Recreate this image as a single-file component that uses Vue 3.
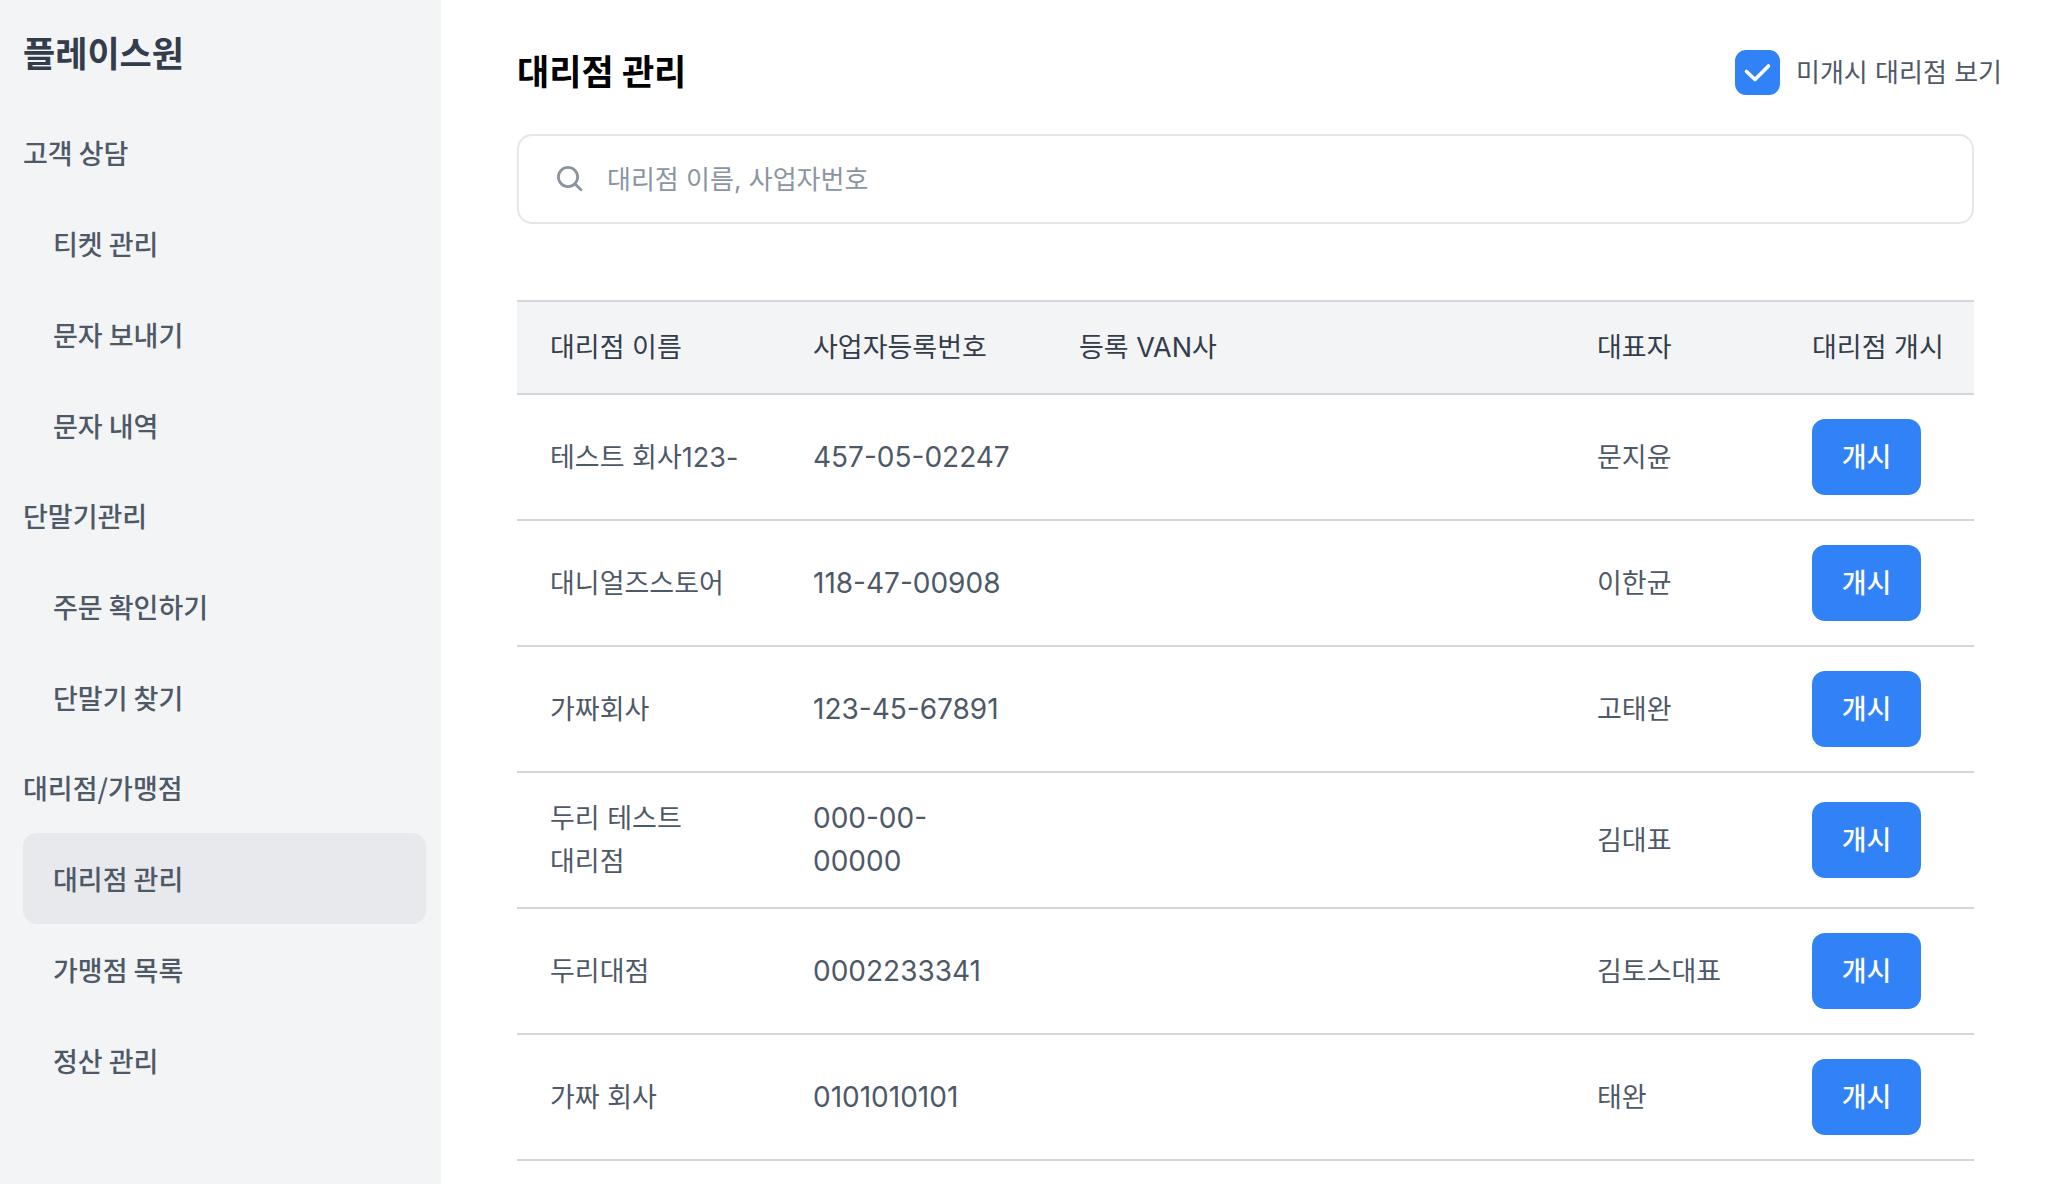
<script setup>
import { ref } from 'vue'

const menu = [
  { title: '고객 상담', items: ['티켓 관리', '문자 보내기', '문자 내역'] },
  { title: '단말기관리', items: ['주문 확인하기', '단말기 찾기'] },
  { title: '대리점/가맹점', items: ['대리점 관리', '가맹점 목록', '정산 관리'] },
]
const current = ref('대리점 관리')
const showHidden = ref(true)
const keyword = ref('')

const agencies = [
  { name: '테스트 회사123-', number: '457-05-02247', van: '', owner: '문지윤' },
  { name: '대니얼즈스토어', number: '118-47-00908', van: '', owner: '이한균' },
  { name: '가짜회사', number: '123-45-67891', van: '', owner: '고태완' },
  { name: '두리 테스트 대리점', number: '000-00-00000', van: '', owner: '김대표' },
  { name: '두리대점', number: '0002233341', van: '', owner: '김토스대표' },
  { name: '가짜 회사', number: '0101010101', van: '', owner: '태완' },
]
</script>

<template>
  <div class="layout">
    <aside class="sidebar">
      <p class="brand">플레이스원</p>
      <nav>
        <section v-for="group in menu" :key="group.title">
          <h2 class="group-title">{{ group.title }}</h2>
          <ul class="menu">
            <li v-for="item in group.items" :key="item">
              <a
                href="#"
                class="menu-link"
                :class="{ active: item === current }"
                @click.prevent="current = item"
              >{{ item }}</a>
            </li>
          </ul>
        </section>
      </nav>
    </aside>

    <main class="content">
      <header class="page-header">
        <h1 class="page-title">대리점 관리</h1>
        <label class="toggle">
          <span class="checkbox">
            <input v-model="showHidden" type="checkbox" class="checkbox-input" />
            <svg v-if="showHidden" class="checkbox-mark" viewBox="0 0 45 45" aria-hidden="true">
              <path d="M11.5 21.5 L20 29.5 L33.5 16" />
            </svg>
          </span>
          <span>미개시 대리점 보기</span>
        </label>
      </header>

      <label class="search">
        <svg class="search-icon" viewBox="0 0 28 28" aria-hidden="true">
          <circle cx="12" cy="12" r="9.6" />
          <path d="M19 19 L25 24.7" />
        </svg>
        <input
          v-model="keyword"
          class="search-input"
          type="text"
          placeholder="대리점 이름, 사업자번호"
          aria-label="대리점 검색"
        />
      </label>

      <table class="table">
        <colgroup>
          <col class="col-name" />
          <col class="col-number" />
          <col />
          <col class="col-owner" />
          <col class="col-open" />
        </colgroup>
        <thead>
          <tr>
            <th scope="col">대리점 이름</th>
            <th scope="col">사업자등록번호</th>
            <th scope="col">등록 VAN사</th>
            <th scope="col">대표자</th>
            <th scope="col">대리점 개시</th>
          </tr>
        </thead>
        <tbody>
          <tr v-for="agency in agencies" :key="agency.number">
            <td>{{ agency.name }}</td>
            <td class="number">{{ agency.number }}</td>
            <td>{{ agency.van }}</td>
            <td>{{ agency.owner }}</td>
            <td><button type="button" class="open-button">개시</button></td>
          </tr>
        </tbody>
      </table>
    </main>
  </div>
</template>

<style>
body {
  margin: 0;
  background: #fff;
}
</style>

<style scoped>
.layout {
  display: flex;
  min-height: 100vh;
  font-family: Inter, 'Noto Sans CJK KR', sans-serif;
  font-size: 27px;
  line-height: 43px;
  color: #4e5968;
  word-break: keep-all;
}

.sidebar {
  box-sizing: border-box;
  flex: 0 0 441px;
  padding: 28px 15px 0 23px;
  background: #f3f4f6;
  font-family: 'Noto Sans CJK KR', sans-serif;
}

.brand {
  margin: 0 0 32px;
  font-size: 35px;
  line-height: 48px;
  font-weight: 700;
  color: #333d4b;
}

.group-title {
  margin: 0;
  font-size: 27px;
  line-height: 90px;
  font-weight: 500;
}

.menu {
  margin: 0;
  padding: 0;
  list-style: none;
}

.menu-link {
  display: block;
  padding-left: 30px;
  border-radius: 14px;
  line-height: 91px;
  font-weight: 500;
  color: inherit;
  text-decoration: none;
}

.menu-link.active {
  background: #e8e9ec;
}

.content {
  flex: 1;
  min-width: 0;
  padding: 48px 74px 0 76px;
}

.page-header {
  display: flex;
  align-items: center;
  justify-content: space-between;
  margin: 0 -28px 38px 0;
}

.page-title {
  margin: 0;
  font-size: 35px;
  line-height: 48px;
  font-weight: 700;
  color: #000;
}

.toggle {
  display: flex;
  align-items: center;
  gap: 16px;
  font-size: 26px;
}

.checkbox {
  position: relative;
  display: block;
  width: 45px;
  height: 45px;
}

.checkbox-input {
  appearance: none;
  display: block;
  width: 100%;
  height: 100%;
  margin: 0;
  border: 2px solid #d1d6db;
  border-radius: 11px;
  background: #fff;
}

.checkbox-input:checked {
  border-color: #3182f6;
  background: #3182f6;
}

.checkbox-mark {
  position: absolute;
  inset: 0;
  fill: none;
  stroke: #fff;
  stroke-width: 3.6;
  stroke-linecap: round;
  stroke-linejoin: round;
  pointer-events: none;
}

.search {
  box-sizing: border-box;
  display: flex;
  align-items: center;
  gap: 23px;
  height: 90px;
  margin-bottom: 76px;
  padding: 0 37px;
  border: 2px solid #e5e6e8;
  border-radius: 15px;
  font-size: 26px;
}

.search-icon {
  flex: none;
  width: 28px;
  height: 28px;
  fill: none;
  stroke: #8b95a1;
  stroke-width: 2.8;
  stroke-linecap: round;
}

.search-input {
  flex: 1;
  min-width: 0;
  padding: 0;
  border: 0;
  outline: 0;
  background: transparent;
  font: inherit;
  color: #333d4b;
}

.search-input::placeholder {
  color: #8b95a1;
  opacity: 1;
}

.table {
  width: 100%;
  table-layout: fixed;
  border-spacing: 0;
  text-align: left;
}

.col-name {
  width: 263px;
}

.col-number {
  width: 266px;
}

.col-owner {
  width: 215px;
}

.col-open {
  width: 195px;
}

.table th,
.table td {
  padding: 24px 33px;
  border-bottom: 2px solid #d3d7dc;
  vertical-align: middle;
}

.table th {
  border-top: 2px solid #d3d7dc;
  background: #f3f4f6;
  font-weight: 400;
  color: #333d4b;
  white-space: nowrap;
}

.table .number {
  font-size: 28px;
}

.open-button {
  display: block;
  width: 109px;
  height: 76px;
  padding: 0;
  border: 0;
  border-radius: 13px;
  background: #3182f6;
  font: inherit;
  font-weight: 500;
  color: #fff;
}
</style>
